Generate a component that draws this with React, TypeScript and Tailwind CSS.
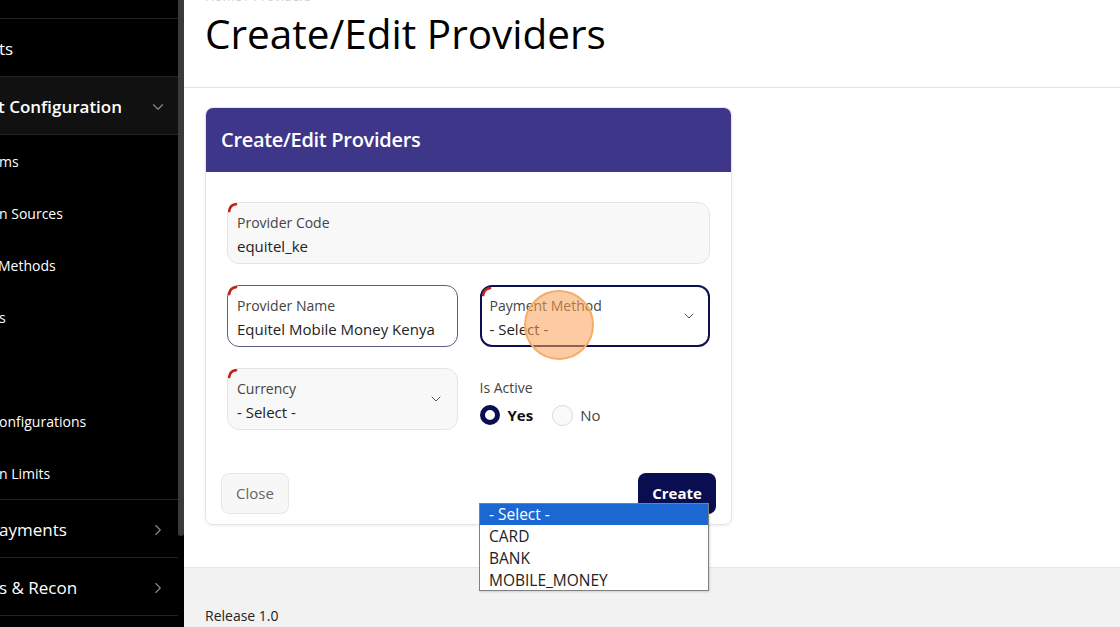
import React from "react";
import { ChevronDown, ChevronRight } from "lucide-react";

const font = { fontFamily: '"Open Sans", "Noto Sans", sans-serif' };

function RedMark() {
  return (
    <svg className="absolute left-0 top-0" width="10" height="10" viewBox="0 0 10 10">
      <path d="M1.2 8 Q1.8 2 8 1.2" stroke="#c1231c" strokeWidth="2.6" fill="none" strokeLinecap="round" />
    </svg>
  );
}

function Field({
  label,
  value,
  variant,
  select,
}: {
  label: string;
  value: string;
  variant: "disabled" | "normal" | "focus";
  select?: boolean;
}) {
  const cls =
    variant === "disabled"
      ? "bg-[#f8f8f8] border border-[#e4e4e4]"
      : variant === "normal"
      ? "bg-white border border-[#5b5f85]"
      : "bg-white border-2 border-[#0c1050]";
  return (
    <div className={`relative h-[62px] rounded-[12px] ${cls} flex items-center`}>
      <RedMark />
      <div className={`flex-1 flex flex-col ${variant === "focus" ? "pl-[8px]" : "pl-[9px]"} leading-none pt-[4px]`}>
        <span className="text-[14px] text-[#444] leading-[20px]">{label}</span>
        <span className="text-[15px] text-[#222] leading-[22px] mt-[2px]">{value}</span>
      </div>
      {select && (
        <ChevronDown className={variant === "focus" ? "mr-[11px] text-[#555]" : "mr-[13px] text-[#555]"} size={16} strokeWidth={1.5} />
      )}
    </div>
  );
}

function SideItem({ text, bold, bg, chevron, clip }: { text: string; bold?: boolean; bg?: string; chevron?: "down" | "right"; clip: number }) {
  return (
    <div className={`h-[58px] flex items-center border-b border-[#222] pt-[3px] ${bg ?? ""}`}>
      <span
        className={`flex-1 whitespace-nowrap text-[17px] text-white ${bold ? "font-semibold" : ""}`}
        style={{ marginLeft: -clip }}
      >
        {text}
      </span>
      {chevron === "down" && <ChevronDown className="mr-[11px] text-[#8a8a8a]" size={18} strokeWidth={1.5} />}
      {chevron === "right" && <ChevronRight className="mr-[11px] text-[#8a8a8a]" size={18} strokeWidth={1.5} />}
    </div>
  );
}

function SubItem({ text, clip }: { text: string; clip: number }) {
  return (
    <div className="h-[52px] flex items-center">
      <span className="whitespace-nowrap text-[14px] text-white" style={{ marginLeft: -clip }}>
        {text}
      </span>
    </div>
  );
}

export default function App() {
  return (
    <div className="w-[1120px] h-[627px] flex overflow-hidden bg-white relative" style={font}>
      {/* Sidebar */}
      <div className="w-[178px] h-full bg-black overflow-hidden flex flex-col">
        <div className="h-[19px] border-b border-[#222]" />
        <SideItem text="ts" clip={1} />
        <SideItem text="t Configuration" bold bg="bg-[#111111]" chevron="down" clip={2} />
        <div className="flex flex-col">
          <SubItem text="ms" clip={1} />
          <SubItem text="n Sources" clip={1} />
          <SubItem text="Methods" clip={2} />
          <SubItem text="s" clip={1} />
          <SubItem text="" clip={0} />
          <SubItem text="onfigurations" clip={1} />
          <SubItem text="n Limits" clip={1} />
        </div>
        <div className="border-t border-[#222]" />
        <SideItem text="ayments" chevron="right" clip={1} />
        <SideItem text="s & Recon" chevron="right" clip={1} />
      </div>
      {/* Scrollbar */}
      <div className="w-[6px] h-full bg-black flex flex-col">
        <div className="h-[536px] bg-[#3a3a3a] rounded-b-[3px]" />
      </div>
      {/* Main */}
      <div className="flex-1 h-full flex flex-col">
        <div className="h-[88px] border-b border-[#e3e3e3] pl-[21px] relative">
          <div className="text-[13px] text-[#d0d0d0] leading-none mt-[-10px]">Home / Providers</div>
          <h1 className="text-[40.5px] leading-[48px] text-black mt-[7px]">Create/Edit Providers</h1>
        </div>
        <div className="h-[479px] pl-[21px] pt-[19px]">
          <div className="w-[527px] h-[418px] rounded-[8px] border border-[#e6e6e6] shadow-[0_1px_3px_rgba(0,0,0,0.08)] overflow-hidden flex flex-col">
            <div className="h-[64px] bg-[#3e3689] flex items-center pl-[15px]">
              <span className="text-white text-[20px] font-semibold tracking-[-0.3px]">Create/Edit Providers</span>
            </div>
            <div className="flex-1 flex flex-col px-[21px] pt-[30px]">
              <Field label="Provider Code" value="equitel_ke" variant="disabled" />
              <div className="grid grid-cols-2 gap-[22px] mt-[21px]">
                <Field label="Provider Name" value="Equitel Mobile Money Kenya" variant="normal" />
                <Field label="Payment Method" value="- Select -" variant="focus" select />
              </div>
              <div className="grid grid-cols-2 gap-[22px] mt-[21px]">
                <Field label="Currency" value="- Select -" variant="disabled" select />
                <div className="flex flex-col pt-[9px]">
                  <span className="text-[14px] text-[#444] leading-[22px]">Is Active</span>
                  <div className="flex items-center mt-[5px]">
                    <span className="w-[20px] h-[20px] rounded-full border-[5px] border-[#0b0f4f] bg-white" />
                    <span className="ml-[8px] text-[15px] font-bold text-[#111]">Yes</span>
                    <span className="ml-[19px] w-[21px] h-[21px] rounded-full border border-[#d8d8d8] bg-[#fafafa]" />
                    <span className="ml-[7px] text-[15px] text-[#444]">No</span>
                  </div>
                </div>
              </div>
            </div>
            <div className="flex justify-between items-center px-[15px] pb-[10px]">
              <button className="h-[41px] w-[68px] rounded-[8px] bg-[#f7f7f7] border border-[#e6e6e6] text-[15px] text-[#666]">Close</button>
              <button className="h-[41px] w-[78px] rounded-[8px] bg-[#0a0e50] text-[15px] font-bold text-white">Create</button>
            </div>
          </div>
        </div>
        <div className="flex-1 bg-[#f2f2f2] border-t border-[#e6e6e6] pl-[21px] flex items-end">
          <span className="text-[14px] text-[#222] leading-[22px]">Release 1.0</span>
        </div>
      </div>

      {/* Dropdown list overlay */}
      <div className="absolute left-[479px] top-[503px] w-[230px] h-[88px] bg-white border border-[#808080] shadow-[1px_1px_2px_rgba(0,0,0,0.15)] flex flex-col text-[15.5px] leading-[22px]">
        <div className="h-[21px] bg-[#1b68d3] text-white pl-[9px] leading-[21px]">- Select -</div>
        <div className="h-[22px] text-[#222] pl-[9px]">CARD</div>
        <div className="h-[22px] text-[#222] pl-[9px]">BANK</div>
        <div className="h-[22px] text-[#222] pl-[9px]">MOBILE_MONEY</div>
      </div>

      {/* Cursor highlight */}
      <div className="absolute left-[524px] top-[290px] w-[70px] h-[70px] rounded-full bg-[rgba(252,160,85,0.55)] border-2 border-[#f6ad6a]" />
    </div>
  );
}
